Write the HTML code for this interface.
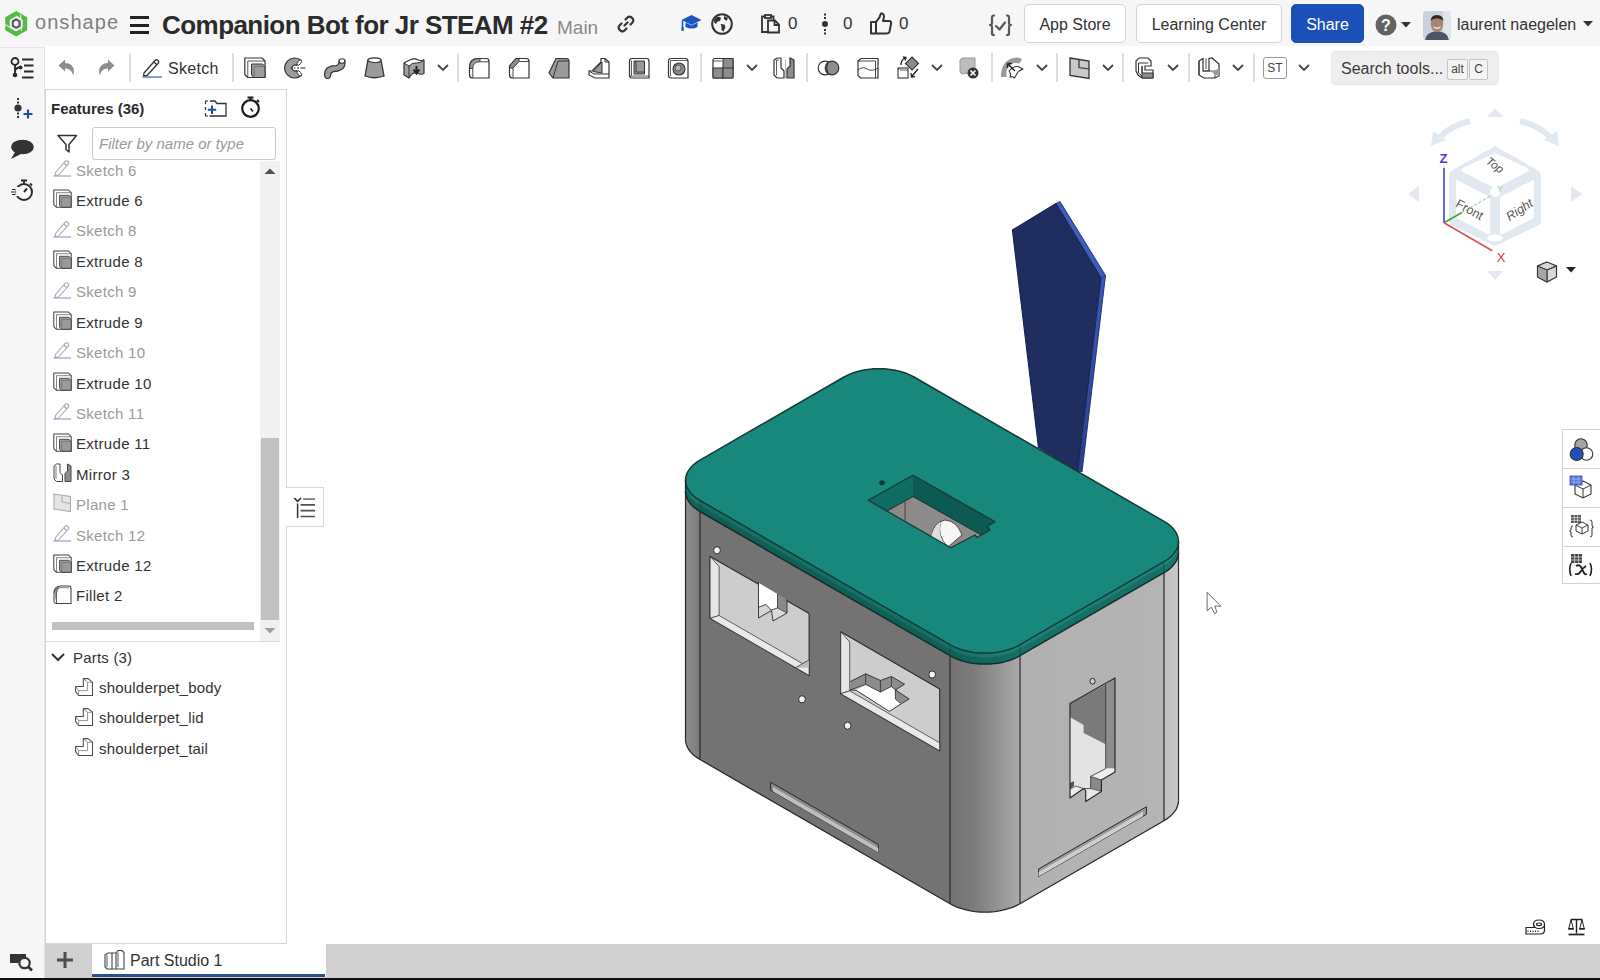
<!DOCTYPE html>
<html><head><meta charset="utf-8">
<style>
*{box-sizing:border-box;margin:0;padding:0}
html,body{width:1600px;height:980px;overflow:hidden;background:#fff;font-family:"Liberation Sans",sans-serif;color:#333}
.a{position:absolute}
#hdr{left:0;top:0;width:1600px;height:47px;background:#f6f6f6}
#rail{left:0;top:47px;width:45px;height:933px;background:#f6f6f6;border-right:1px solid #e2e2e2;border-top:1px solid #e6e6e6}
#tb{left:45px;top:46px;width:1555px;height:44px;background:#fff}
#panel{left:45px;top:89px;width:242px;height:855px;background:#fff;border:1px solid #d6d6d6}
#bbar{left:45px;top:944px;width:1555px;height:35px;background:#d0d0d0}
#bline{left:0;top:978px;width:1600px;height:2px;background:#111}
.sep{position:absolute;top:53px;width:2px;height:29px;background:#dedede}
.btn{position:absolute;top:4px;height:39px;border:1px solid #d4d4d4;border-radius:5px;background:#fff;font-size:16px;color:#333;line-height:39px;text-align:center}
.fi{position:absolute;left:76px;font-size:15px;color:#333;white-space:nowrap;letter-spacing:0.3px}
.fi.s{color:#9a9a9a}
svg{position:absolute;overflow:visible}
</style></head><body>
<div id="hdr" class="a"></div>
<div id="rail" class="a"></div>
<div id="tb" class="a"></div>
<div id="panel" class="a"></div>
<div id="bbar" class="a"></div>
<div id="bline" class="a"></div>
<!-- MODEL --><svg style="left:0;top:0" width="1600" height="980" viewBox="0 0 1600 980"><defs>
<linearGradient id="gL" x1="0" x2="1" y1="0" y2="0"><stop offset="0" stop-color="#8e8e8e"/><stop offset="1" stop-color="#7a7a7a"/></linearGradient>
<linearGradient id="gF" x1="0" x2="1" y1="0" y2="0"><stop offset="0" stop-color="#737373"/><stop offset="0.35" stop-color="#7c7c7c"/><stop offset="1" stop-color="#aaaaaa"/></linearGradient>
<linearGradient id="gR" x1="0" x2="1" y1="0" y2="0"><stop offset="0" stop-color="#b1b1b1"/><stop offset="1" stop-color="#b4b4b4"/></linearGradient>
<linearGradient id="gRR" x1="0" x2="1" y1="0" y2="0"><stop offset="0" stop-color="#c0c0c0"/><stop offset="1" stop-color="#c8c8c8"/></linearGradient>
<linearGradient id="gTail" x1="0" x2="0" y1="0" y2="1"><stop offset="0" stop-color="#3a5ab8"/><stop offset="1" stop-color="#2b3f92"/></linearGradient>
<linearGradient id="gLidF" x1="0" x2="1" y1="0" y2="0"><stop offset="0" stop-color="#0e5f56"/><stop offset="1" stop-color="#127066"/></linearGradient><linearGradient id="gLidF1" x1="0" x2="1" y1="0" y2="0"><stop offset="0" stop-color="#137267"/><stop offset="1" stop-color="#198276"/></linearGradient>
</defs><polygon points="1012.4,230.0 1056.0,203.5 1101.0,278.0 1077.5,472.0 1038.5,448.0" fill="#1f2e5e"/>
<polygon points="1056.0,203.5 1060.0,201.5 1105.5,275.5 1101.0,278.0" fill="#3f5fc0"/>
<polygon points="1101.0,278.0 1105.5,275.5 1082.0,472.0 1077.5,472.0" fill="url(#gTail)"/>
<polyline points="1038.5,448.0 1012.4,230.0 1056.0,203.5 1101.0,278.0 1077.5,472.0" fill="none" stroke="#172250" stroke-width="1.1" stroke-linejoin="round"/>
<polyline points="1056.0,203.5 1060.0,201.5 1105.5,275.5 1082.0,472.0" fill="none" stroke="#1a2860" stroke-width="0.9" stroke-linejoin="round"/>
<polyline points="1101.0,278.0 1105.5,275.5" fill="none" stroke="#1a2860" stroke-width="0.8" stroke-linejoin="round"/>
<polygon points="685.5,491.3 685.7,494.1 686.5,496.9 687.6,499.6 689.3,502.2 691.3,504.8 693.8,507.2 696.7,509.4 700.0,511.5 700.0,759.5 696.7,757.4 693.8,755.2 691.3,752.8 689.3,750.2 687.6,747.6 686.5,744.9 685.7,742.1 685.5,739.3" fill="url(#gL)"/>
<polygon points="700.0,511.5 950.0,655.7 950.0,903.7 700.0,759.5" fill="#737373"/>
<polygon points="950.0,655.7 953.6,657.6 957.5,659.3 961.7,660.7 966.1,661.9 970.6,662.9 975.3,663.6 980.1,664.0 985.0,664.1 989.9,664.0 994.7,663.6 999.4,662.9 1003.9,661.9 1008.3,660.7 1012.5,659.3 1016.4,657.6 1020.0,655.7 1020.0,903.7 1016.4,905.6 1012.5,907.3 1008.3,908.7 1003.9,909.9 999.4,910.9 994.7,911.6 989.9,912.0 985.0,912.1 980.1,912.0 975.3,911.6 970.6,910.9 966.1,909.9 961.7,908.7 957.5,907.3 953.6,905.6 950.0,903.7" fill="url(#gF)"/>
<polygon points="1020.0,655.7 1164.0,572.7 1164.0,820.7 1020.0,903.7" fill="url(#gR)"/>
<polygon points="1164.0,572.7 1167.3,570.6 1170.2,568.3 1172.7,565.9 1174.7,563.4 1176.4,560.8 1177.5,558.0 1178.3,555.3 1178.5,552.5 1178.5,800.5 1178.3,803.3 1177.5,806.0 1176.4,808.8 1174.7,811.4 1172.7,813.9 1170.2,816.3 1167.3,818.6 1164.0,820.7" fill="url(#gRR)"/>
<polygon points="710.1,556.4 809.1,613.5 809.1,675.4 710.1,618.3" fill="#cdcdcd" stroke="#2a2a2a" stroke-width="1.1" stroke-linejoin="round"/>
<polygon points="710.1,556.4 719.1,566.6 719.1,615.5 710.1,618.3" fill="#e6e6e6" stroke="#2a2a2a" stroke-width="0.7" stroke-linejoin="round"/>
<polygon points="710.1,618.3 719.1,615.5 809.1,667.4 809.1,675.4" fill="#e9e9e9" stroke="#2a2a2a" stroke-width="0.7" stroke-linejoin="round"/>
<polygon points="840.7,631.8 939.7,688.9 939.7,750.8 840.7,693.7" fill="#cdcdcd" stroke="#2a2a2a" stroke-width="1.1" stroke-linejoin="round"/>
<polygon points="840.7,631.8 849.7,642.0 849.7,690.9 840.7,693.7" fill="#e6e6e6" stroke="#2a2a2a" stroke-width="0.7" stroke-linejoin="round"/>
<polygon points="840.7,693.7 849.7,690.9 939.7,742.8 939.7,750.8" fill="#e9e9e9" stroke="#2a2a2a" stroke-width="0.7" stroke-linejoin="round"/>
<polygon points="759.0,583.0 777.5,594.0 777.5,608.0 771.0,610.0 766.0,604.5 759.0,607.0" fill="#ffffff"/>
<polygon points="777.5,594.0 787.0,599.5 787.0,613.0 777.5,608.0" fill="#8a8a8a"/>
<polygon points="759.0,607.0 766.0,604.5 771.0,610.0 759.0,617.5" fill="#d6d6d6"/>
<polygon points="771.0,610.0 777.5,608.0 787.0,613.0 773.0,621.0" fill="#dadada"/>
<polyline points="758.5,582.0 758.5,618.0 771.5,610.5 773.0,621.0 787.0,613.0 787.0,599.5" fill="none" stroke="#2a2a2a" stroke-width="0.9" stroke-linejoin="round"/>
<polyline points="759.0,607.0 766.0,604.5 771.0,610.0" fill="none" stroke="#2a2a2a" stroke-width="0.8" stroke-linejoin="round"/>
<polyline points="777.5,594.0 777.5,608.0 771.0,610.0" fill="none" stroke="#2a2a2a" stroke-width="0.8" stroke-linejoin="round"/>
<polyline points="777.5,608.0 787.0,613.0" fill="none" stroke="#2a2a2a" stroke-width="0.7" stroke-linejoin="round"/>
<polygon points="795.0,668.0 808.9,660.0 808.9,667.5" fill="#bdbdbd"/>
<polyline points="795.0,668.0 808.9,660.0" fill="none" stroke="#2a2a2a" stroke-width="0.7" stroke-linejoin="round"/>
<polygon points="856.2,690.3 865.7,684.5 880.4,692.0 891.4,686.5 895.4,690.0 895.4,699.0 900.6,703.5 889.3,711.4" fill="#ffffff"/>
<polygon points="850.1,681.7 865.7,673.8 880.4,680.5 891.4,676.5 904.6,684.2 895.4,690.0 891.4,686.5 880.4,692.0 865.7,684.5 850.1,690.0" fill="#8c8c8c"/>
<polygon points="895.4,690.0 909.2,698.9 900.6,703.5 895.4,699.0" fill="#8c8c8c"/>
<polyline points="850.1,681.7 865.7,673.8 880.4,680.5 891.4,676.5 904.6,684.2 895.4,690.0 909.2,698.9 889.3,711.4 856.2,690.3 850.1,690.0" fill="none" stroke="#2a2a2a" stroke-width="0.9" stroke-linejoin="round"/>
<polyline points="865.7,673.8 865.7,684.5" fill="none" stroke="#2a2a2a" stroke-width="0.8" stroke-linejoin="round"/>
<polyline points="880.4,680.5 880.4,692.0" fill="none" stroke="#2a2a2a" stroke-width="0.8" stroke-linejoin="round"/>
<polyline points="891.4,676.5 891.4,686.5" fill="none" stroke="#2a2a2a" stroke-width="0.7" stroke-linejoin="round"/>
<polyline points="850.1,690.0 865.7,684.5 880.4,692.0 891.4,686.5 895.4,690.0 895.4,699.0 900.6,703.5" fill="none" stroke="#2a2a2a" stroke-width="0.8" stroke-linejoin="round"/>
<ellipse cx="717.0" cy="550.3" rx="3.4" ry="3.6" fill="#f2f2f2" stroke="#2a2a2a" stroke-width="1"/>
<ellipse cx="802.0" cy="699.3" rx="3.4" ry="3.6" fill="#f2f2f2" stroke="#2a2a2a" stroke-width="1"/>
<ellipse cx="847.6" cy="725.7" rx="3.4" ry="3.6" fill="#f2f2f2" stroke="#2a2a2a" stroke-width="1"/>
<ellipse cx="932.2" cy="674.5" rx="3.4" ry="3.6" fill="#f2f2f2" stroke="#2a2a2a" stroke-width="1"/>
<polygon points="770.6,782.2 878.3,844.4 878.3,852.4 770.6,790.2" fill="#8a8a8a" stroke="#2a2a2a" stroke-width="1" stroke-linejoin="round"/>
<polygon points="773.0,787.1 878.3,847.9 878.3,852.4 773.0,791.6" fill="#bfbfbf"/>
<polygon points="1070.0,703.6 1115.0,677.9 1115.0,772.1 1101.4,780.0 1101.4,791.4 1085.7,801.4 1085.7,790.7 1083.6,788.6 1070.0,797.9" fill="#e3e3e3"/>
<polygon points="1105.7,684.3 1115.0,677.9 1115.0,768.6 1105.7,768.6" fill="#8e8e8e"/>
<polygon points="1070.0,703.6 1105.7,684.3 1105.7,744.3 1083.6,732.9 1083.6,725.0 1070.0,717.1" fill="#7a7a7a"/>
<polygon points="1090.7,776.4 1105.7,768.6 1115.0,768.6 1115.0,772.1 1101.4,780.0" fill="#eeeeee"/>
<polygon points="1090.7,776.4 1101.4,780.0 1101.4,791.4 1090.7,788.6" fill="#8a8a8a"/>
<polygon points="1070.0,789.0 1076.0,786.0 1083.6,788.6 1070.0,797.9" fill="#eaeaea"/>
<polygon points="1083.6,788.6 1090.7,788.6 1101.4,791.4 1085.7,801.4 1085.7,790.7" fill="#e8e8e8"/>
<polygon points="1070.0,783.0 1074.0,781.0 1074.0,786.0 1070.0,789.0" fill="#555"/>
<polyline points="1105.7,684.3 1105.7,768.6 1090.7,776.4 1090.7,788.6 1083.6,788.6" fill="none" stroke="#2a2a2a" stroke-width="0.8" stroke-linejoin="round"/>
<polyline points="1101.4,780.0 1090.7,776.4" fill="none" stroke="#2a2a2a" stroke-width="0.7" stroke-linejoin="round"/>
<polyline points="1070.0,789.0 1076.0,786.0 1083.6,788.6" fill="none" stroke="#2a2a2a" stroke-width="0.7" stroke-linejoin="round"/>
<polyline points="1090.7,788.6 1101.4,791.4" fill="none" stroke="#2a2a2a" stroke-width="0.6" stroke-linejoin="round"/>
<polygon points="1070.0,703.6 1115.0,677.9 1115.0,772.1 1101.4,780.0 1101.4,791.4 1085.7,801.4 1085.7,790.7 1083.6,788.6 1070.0,797.9" fill="none" stroke="#2a2a2a" stroke-width="1.2" stroke-linejoin="round"/>
<ellipse cx="1092.5" cy="681.2" rx="2.6" ry="2.9" fill="#cfcfcf" stroke="#2a2a2a" stroke-width="1"/>
<polygon points="1038.6,869.0 1146.4,806.8 1146.4,814.3 1038.6,876.5" fill="#9a9a9a" stroke="#2a2a2a" stroke-width="1" stroke-linejoin="round"/>
<polygon points="1038.6,872.0 1143.0,811.8 1143.0,816.3 1038.6,876.5" fill="#cfcfcf"/>
<polyline points="685.5,739.3 685.7,742.1 686.5,744.9 687.6,747.6 689.3,750.2 691.3,752.8 693.8,755.2 696.7,757.4 700.0,759.5 700.0,759.5 950.0,903.7 953.6,905.6 957.5,907.3 961.7,908.7 966.1,909.9 970.6,910.9 975.3,911.6 980.1,912.0 985.0,912.1 989.9,912.0 994.7,911.6 999.4,910.9 1003.9,909.9 1008.3,908.7 1012.5,907.3 1016.4,905.6 1020.0,903.7 1164.0,820.7 1167.3,818.6 1170.2,816.3 1172.7,813.9 1174.7,811.4 1176.4,808.8 1177.5,806.0 1178.3,803.3 1178.5,800.5" fill="none" stroke="#2a2a2a" stroke-width="1.3" stroke-linejoin="round"/>
<polyline points="700.0,511.5 700.0,759.5" fill="none" stroke="#2a2a2a" stroke-width="1.2" stroke-linejoin="round"/>
<polyline points="950.0,655.7 950.0,903.7" fill="none" stroke="#2a2a2a" stroke-width="1.2" stroke-linejoin="round"/>
<polyline points="1020.0,655.7 1020.0,903.7" fill="none" stroke="#2a2a2a" stroke-width="1.2" stroke-linejoin="round"/>
<polyline points="1164.0,572.7 1164.0,820.7" fill="none" stroke="#2a2a2a" stroke-width="1.2" stroke-linejoin="round"/>
<polyline points="685.5,491.3 685.5,739.3" fill="none" stroke="#2a2a2a" stroke-width="1.2" stroke-linejoin="round"/>
<polyline points="1178.5,552.5 1178.5,800.5" fill="none" stroke="#2a2a2a" stroke-width="1.2" stroke-linejoin="round"/>
<polygon points="685.5,480.3 685.7,483.1 686.5,485.9 687.6,488.6 689.3,491.2 691.3,493.8 693.8,496.2 696.7,498.4 700.0,500.5 700.0,505.0 696.7,502.9 693.8,500.7 691.3,498.3 689.3,495.7 687.6,493.1 686.5,490.4 685.7,487.6 685.5,484.8" fill="#167c71"/>
<polygon points="700.0,500.5 950.0,644.7 950.0,649.2 700.0,505.0" fill="#137267"/>
<polygon points="950.0,644.7 953.6,646.6 957.5,648.3 961.7,649.7 966.1,650.9 970.6,651.9 975.3,652.6 980.1,653.0 985.0,653.1 989.9,653.0 994.7,652.6 999.4,651.9 1003.9,650.9 1008.3,649.7 1012.5,648.3 1016.4,646.6 1020.0,644.7 1020.0,649.2 1016.4,651.1 1012.5,652.8 1008.3,654.2 1003.9,655.4 999.4,656.4 994.7,657.1 989.9,657.5 985.0,657.6 980.1,657.5 975.3,657.1 970.6,656.4 966.1,655.4 961.7,654.2 957.5,652.8 953.6,651.1 950.0,649.2" fill="url(#gLidF1)"/>
<polygon points="1020.0,644.7 1164.0,561.7 1164.0,566.2 1020.0,649.2" fill="#198276"/>
<polygon points="1164.0,561.7 1167.3,559.6 1170.2,557.3 1172.7,554.9 1174.7,552.4 1176.4,549.8 1177.5,547.0 1178.3,544.3 1178.5,541.5 1178.5,546.0 1178.3,548.8 1177.5,551.5 1176.4,554.3 1174.7,556.9 1172.7,559.4 1170.2,561.8 1167.3,564.1 1164.0,566.2" fill="#1b897c"/>
<polygon points="685.5,484.8 685.7,487.6 686.5,490.4 687.6,493.1 689.3,495.7 691.3,498.3 693.8,500.7 696.7,502.9 700.0,505.0 700.0,511.5 696.7,509.4 693.8,507.2 691.3,504.8 689.3,502.2 687.6,499.6 686.5,496.9 685.7,494.1 685.5,491.3" fill="#0f645b"/>
<polygon points="700.0,505.0 950.0,649.2 950.0,655.7 700.0,511.5" fill="#0e5f56"/>
<polygon points="950.0,649.2 953.6,651.1 957.5,652.8 961.7,654.2 966.1,655.4 970.6,656.4 975.3,657.1 980.1,657.5 985.0,657.6 989.9,657.5 994.7,657.1 999.4,656.4 1003.9,655.4 1008.3,654.2 1012.5,652.8 1016.4,651.1 1020.0,649.2 1020.0,655.7 1016.4,657.6 1012.5,659.3 1008.3,660.7 1003.9,661.9 999.4,662.9 994.7,663.6 989.9,664.0 985.0,664.1 980.1,664.0 975.3,663.6 970.6,662.9 966.1,661.9 961.7,660.7 957.5,659.3 953.6,657.6 950.0,655.7" fill="url(#gLidF)"/>
<polygon points="1020.0,649.2 1164.0,566.2 1164.0,572.7 1020.0,655.7" fill="#127066"/>
<polygon points="1164.0,566.2 1167.3,564.1 1170.2,561.8 1172.7,559.4 1174.7,556.9 1176.4,554.3 1177.5,551.5 1178.3,548.8 1178.5,546.0 1178.5,552.5 1178.3,555.3 1177.5,558.0 1176.4,560.8 1174.7,563.4 1172.7,565.9 1170.2,568.3 1167.3,570.6 1164.0,572.7" fill="#15786d"/>
<polyline points="685.5,484.8 685.7,487.6 686.5,490.4 687.6,493.1 689.3,495.7 691.3,498.3 693.8,500.7 696.7,502.9 700.0,505.0 700.0,505.0 950.0,649.2 953.6,651.1 957.5,652.8 961.7,654.2 966.1,655.4 970.6,656.4 975.3,657.1 980.1,657.5 985.0,657.6 989.9,657.5 994.7,657.1 999.4,656.4 1003.9,655.4 1008.3,654.2 1012.5,652.8 1016.4,651.1 1020.0,649.2 1164.0,566.2 1167.3,564.1 1170.2,561.8 1172.7,559.4 1174.7,556.9 1176.4,554.3 1177.5,551.5 1178.3,548.8 1178.5,546.0" fill="none" stroke="#0f4f48" stroke-width="0.7" stroke-linejoin="round"/>
<polygon points="700.0,460.1 696.3,462.5 693.1,465.1 690.4,467.9 688.3,470.9 686.7,473.9 685.8,477.1 685.5,480.3 685.8,483.5 686.7,486.7 688.3,489.7 690.4,492.7 693.1,495.5 696.3,498.1 700.0,500.5 950.0,644.7 954.1,646.9 958.7,648.7 963.5,650.3 968.7,651.5 974.0,652.4 979.5,652.9 985.0,653.1 990.5,652.9 996.0,652.4 1001.3,651.5 1006.5,650.3 1011.3,648.7 1015.9,646.9 1020.0,644.7 1164.0,561.7 1167.7,559.3 1170.9,556.7 1173.6,553.9 1175.7,550.9 1177.3,547.8 1178.2,544.7 1178.5,541.5 1178.2,538.3 1177.3,535.1 1175.7,532.0 1173.6,529.1 1170.9,526.3 1167.7,523.7 1164.0,521.3 914.0,377.0 909.9,374.9 905.3,373.0 900.5,371.5 895.3,370.3 890.0,369.4 884.5,368.8 879.0,368.7 873.5,368.8 868.0,369.4 862.7,370.3 857.5,371.5 852.7,373.0 848.1,374.9 844.0,377.0" fill="#18877c" stroke="#173a36" stroke-width="1.5" stroke-linejoin="round"/>
<polyline points="685.5,491.3 685.7,494.1 686.5,496.9 687.6,499.6 689.3,502.2 691.3,504.8 693.8,507.2 696.7,509.4 700.0,511.5 700.0,511.5 950.0,655.7 953.6,657.6 957.5,659.3 961.7,660.7 966.1,661.9 970.6,662.9 975.3,663.6 980.1,664.0 985.0,664.1 989.9,664.0 994.7,663.6 999.4,662.9 1003.9,661.9 1008.3,660.7 1012.5,659.3 1016.4,657.6 1020.0,655.7 1164.0,572.7 1167.3,570.6 1170.2,568.3 1172.7,565.9 1174.7,563.4 1176.4,560.8 1177.5,558.0 1178.3,555.3 1178.5,552.5" fill="none" stroke="#152c29" stroke-width="1.5" stroke-linejoin="round"/>
<polyline points="700.0,500.5 700.0,511.5" fill="none" stroke="#1f4a45" stroke-width="0.8" stroke-linejoin="round"/>
<polyline points="950.0,644.7 950.0,655.7" fill="none" stroke="#1f4a45" stroke-width="0.8" stroke-linejoin="round"/>
<polyline points="1020.0,644.7 1020.0,655.7" fill="none" stroke="#1f4a45" stroke-width="0.8" stroke-linejoin="round"/>
<polyline points="1164.0,561.7 1164.0,572.7" fill="none" stroke="#1f4a45" stroke-width="0.8" stroke-linejoin="round"/>
<polyline points="685.5,480.3 685.5,491.3" fill="none" stroke="#17302d" stroke-width="1.3" stroke-linejoin="round"/>
<polyline points="1178.5,541.5 1178.5,552.5" fill="none" stroke="#17302d" stroke-width="1.3" stroke-linejoin="round"/>
<clipPath id="hc"><polygon points="868.2,500.3 913.0,475.3 995.2,521.7 987.0,526.5 990.0,530.0 977.0,537.5 975.0,535.0 950.8,547.8"/></clipPath>
<g clip-path="url(#hc)">
<polygon points="868.2,500.3 913.0,475.3 995.2,521.7 987.0,526.5 990.0,530.0 977.0,537.5 975.0,535.0 950.8,547.8" fill="#8b8b8b"/>
<polygon points="868.2,500.3 913.0,475.3 913.0,496.5 868.2,521.5" fill="#0f6c62"/>
<polygon points="913.0,475.3 995.2,521.7 995.2,542.9 913.0,496.5" fill="#0c5a52"/>
<polygon points="887.0,531.0 913.0,516.0 913.0,496.5 887.0,511.0" fill="#8e8888"/>
<polyline points="868.2,521.5 913.0,496.5 995.2,542.9" fill="none" stroke="#1c2e2b" stroke-width="1" stroke-linejoin="round"/>
<polyline points="905.0,501.0 905.0,525.0" fill="none" stroke="#444" stroke-width="1" stroke-linejoin="round"/>
<path d="M931,538 Q933,522 945,520 Q957,521 962,535 L948,547 Q935,546 931,538Z" fill="#f6f6f6" stroke="#3a3a3a" stroke-width="0.9"/>
<path d="M941,521.5 Q936,535 948,547" fill="none" stroke="#444" stroke-width="0.9"/>
<path d="M931,538 Q932,528 941,522 Q937,535 945,545 Q935,545 931,538Z" fill="#dcdcdc"/>
</g>
<polygon points="868.2,500.3 913.0,475.3 995.2,521.7 987.0,526.5 990.0,530.0 977.0,537.5 975.0,535.0 950.8,547.8" fill="none" stroke="#1a3835" stroke-width="1.3" stroke-linejoin="round"/>
<ellipse cx="882.0" cy="482.7" rx="2.8" ry="2.5" fill="#123a35"/>
<path d="M1207.1,592.3 L1207.1,610.7 L1211.4,607.3 L1214.6,613.6 L1216.8,612.1 L1214.8,606 L1221,606.2 Z" fill="#fff" stroke="#5a5a5a" stroke-width="0.9" stroke-linejoin="round"/></svg><!-- /MODEL -->


<!-- header text -->
<svg style="left:4px;top:10px" width="25" height="27" viewBox="0 0 25 27">
<path fill-rule="evenodd" fill="#58b947" d="M12.2 1 L23.2 7.2 L23.2 20.2 L12.2 26.4 L1.2 20.2 L1.2 7.2 Z M12.2 6.2 L18.6 9.9 L18.6 17.5 L12.2 21.2 L5.8 17.5 L5.8 9.9 Z"/>
<path d="M1 14.5 L11.5 20.5 M16.6 4.5 L17.2 21 M12.5 6 L17.5 9.5" stroke="#d9f5cf" stroke-width="1.1"/>
<path d="M12.2 9.3 L15.6 11.3 L15.6 15.9 L12.2 17.9 L8.8 15.9 L8.8 11.3 Z" fill="none" stroke="#555560" stroke-width="2.1"/>
<path d="M15.6 11.3 L15.6 15.9" stroke="#7f5f95" stroke-width="2.3"/>
</svg>
<div class="a" style="left:35px;top:11px;font-size:20px;color:#7f7f7f;letter-spacing:1.05px">onshape</div>
<div class="a" style="left:130px;top:16px;width:19px;height:3px;background:#222"></div>
<div class="a" style="left:130px;top:23.5px;width:19px;height:3px;background:#222"></div>
<div class="a" style="left:130px;top:31px;width:19px;height:3px;background:#222"></div>
<div class="a" style="left:162px;top:10px;font-size:26px;font-weight:bold;color:#2b2b2b;white-space:nowrap;letter-spacing:-0.55px">Companion Bot for Jr STEAM #2</div>
<div class="a" style="left:557px;top:17px;font-size:19px;color:#8a8a8a">Main</div>
<svg style="left:617px;top:15px" width="18" height="18" viewBox="0 0 18 18"><g fill="none" stroke="#333" stroke-width="2.2" stroke-linecap="round"><path d="M7.5 10.5 L10.5 7.5"/><path d="M8.5 4.5 L10.5 2.5 Q12 1 14 2 L16 4 Q17 6 15.5 7.5 L13.5 9.5"/><path d="M9.5 13.5 L7.5 15.5 Q6 17 4 16 L2 14 Q1 12 2.5 10.5 L4.5 8.5"/></g></svg>
<svg style="left:681px;top:14px" width="21" height="18" viewBox="0 0 21 18"><path d="M10.5 1 L20.5 6 L10.5 11 L0.5 6 Z" fill="#1d55c2"/><path d="M4.5 8.5 L4.5 13 Q10.5 16 16.5 13 L16.5 8.5 L10.5 11.5 Z" fill="#1d55c2"/><path d="M1.5 6.5 L1.5 15" stroke="#1d55c2" stroke-width="1.6"/><rect x="0.5" y="13.5" width="2.2" height="3.5" fill="#1d55c2"/></svg>
<svg style="left:711px;top:13px" width="22" height="22" viewBox="0 0 22 22"><circle cx="11" cy="11" r="9.8" fill="none" stroke="#333" stroke-width="2"/><path d="M5 4.5 Q8 3 10 5 L9 8 L6.5 8.5 L5 11 L3.2 9.5 Q3 6 5 4.5Z M9.5 11 L13.5 11.5 L14.5 14 L12.5 18.5 L10.5 17 L10.5 14 Z M13 3 L17 5 L15.5 8 L13 6 Z" fill="#333"/></svg>
<svg style="left:760px;top:14px" width="21" height="20" viewBox="0 0 21 20"><g fill="none" stroke="#333" stroke-width="1.8"><path d="M5.5 2.5 L2 2.5 L2 18 L8 18"/><rect x="5" y="1" width="6" height="3"/><path d="M11 2.5 L13.5 2.5 L13.5 6"/><path d="M8 6.5 L15 6.5 L19 10.5 L19 18.5 L8 18.5 Z"/><path d="M14.5 6.5 L14.5 11 L19 11"/></g></svg>
<div class="a" style="left:788px;top:14px;font-size:17px;color:#333">0</div>
<svg style="left:820px;top:13px" width="10" height="22" viewBox="0 0 10 22"><circle cx="5" cy="11" r="3" fill="#333"/><rect x="4" y="0.5" width="2" height="2" fill="#333"/><rect x="4" y="4" width="2" height="2" fill="#333"/><rect x="4" y="16" width="2" height="2" fill="#333"/><rect x="4" y="19.5" width="2" height="2" fill="#333"/></svg>
<div class="a" style="left:843px;top:14px;font-size:17px;color:#333">0</div>
<svg style="left:869px;top:12px" width="24" height="23" viewBox="0 0 24 23"><path d="M2 10 L7 10 L7 21.5 L2 21.5 Z M7 10 Q11 6 12 1.5 Q15 1 15 5 L14 9 L20.5 9 Q22.5 9.5 22 12 L20.5 19.5 Q20 21.5 17.5 21.5 L7 21.5" fill="none" stroke="#333" stroke-width="2" stroke-linejoin="round"/></svg>
<div class="a" style="left:899px;top:14px;font-size:17px;color:#333">0</div>
<svg style="left:988px;top:14px" width="25" height="23" viewBox="0 0 25 23"><g fill="none" stroke="#585858" stroke-width="2.2" stroke-linejoin="round" stroke-linecap="round"><path d="M6 1.5 Q4 1.5 4 3.5 L4 9 Q4 11 2 11 Q4 11 4 13 L4 19.5 Q4 21 6 21"/><path d="M19 1.5 Q21 1.5 21 3.5 L21 9 Q21 11 23 11 Q21 11 21 13 L21 19.5 Q21 21 19 21"/><path d="M8 12 L11.5 15.5 L17 8.5"/></g></svg>
<div class="btn" style="left:1024px;width:102px">App Store</div>
<div class="btn" style="left:1136px;width:146px">Learning Center</div>
<div class="btn" style="left:1291px;width:73px;background:#1c50b8;border-color:#1c50b8;color:#fff">Share</div>
<svg style="left:1375px;top:14px" width="22" height="22" viewBox="0 0 22 22"><circle cx="11" cy="11" r="10.5" fill="#626262"/><text x="11" y="17" font-family="Liberation Sans" font-weight="bold" font-size="16" fill="#fff" text-anchor="middle">?</text></svg>
<svg style="left:1401px;top:22px" width="10" height="6" viewBox="0 0 10 6"><path d="M0 0 L10 0 L5 5.5Z" fill="#333"/></svg>
<svg style="left:1423px;top:11px" width="28" height="29" viewBox="0 0 28 29"><defs><clipPath id="av"><rect x="0" y="0" width="28" height="29" rx="3"/></clipPath></defs><g clip-path="url(#av)"><rect width="28" height="29" fill="#c9d3dd"/><rect x="20" y="0" width="8" height="29" fill="#dfe5ea"/><path d="M2 29 Q3 21 14 20 Q25 21 26 29 Z" fill="#4d5566"/><ellipse cx="14" cy="13" rx="6.3" ry="8" fill="#a98373"/><path d="M7.5 10 Q8 4 14 4 Q20 4 20.5 10 Q18 7 14 7.5 Q10 7 7.5 10Z" fill="#2f2826"/><path d="M10.5 16 Q14 18.5 17.5 16" stroke="#f1e6e0" stroke-width="1.3" fill="none"/></g></svg>
<div class="a" style="left:1457px;top:16px;font-size:16px;color:#333;white-space:nowrap">laurent naegelen</div>
<svg style="left:1583px;top:21px" width="10" height="6" viewBox="0 0 10 6"><path d="M0 0 L10 0 L5 5.5Z" fill="#333"/></svg>
<!-- toolbar -->
<div class="sep" style="left:129px"></div>
<div class="sep" style="left:232px"></div>
<div class="sep" style="left:457px"></div>
<div class="sep" style="left:700px"></div>
<div class="sep" style="left:806px"></div>
<div class="sep" style="left:991px"></div>
<div class="sep" style="left:1056px"></div>
<div class="sep" style="left:1122px"></div>
<div class="sep" style="left:1188px"></div>
<div class="sep" style="left:1253px"></div>
<svg style="left:58px;top:59px" width="17" height="17" viewBox="0 0 17 17"><path d="M0.5 6.5 L7 0.5 L7 4 Q15 4 16 12 L15.5 16.5 Q13 9 7 9.5 L7 12.5 Z" fill="#8d8d8d"/></svg>
<svg style="left:98px;top:59px" width="17" height="17" viewBox="0 0 17 17"><path d="M16.5 6.5 L10 0.5 L10 4 Q2 4 1 12 L1.5 16.5 Q4 9 10 9.5 L10 12.5 Z" fill="#8d8d8d"/></svg>
<svg style="left:141px;top:57px" width="21" height="21" viewBox="0 0 21 21"><path d="M3 16 L14 3.5 Q15.5 2 17 3.5 Q18.5 5 17 6.5 L6 18.5 L2.5 19 Z M13 5 L15.5 7.5" fill="none" stroke="#333" stroke-width="1.3" stroke-linejoin="round"/><path d="M1.5 20 L21 20" stroke="#4a6fb8" stroke-width="1.3"/></svg>
<div class="a" style="left:168px;top:60px;font-size:16px;color:#333;letter-spacing:0.3px">Sketch</div>
<svg style="left:244px;top:57px" width="22" height="22" viewBox="0 0 22 22"><path d="M0.8 1 L18 1 L21 4 L21 20.5 L3.8 20.5 L0.8 17.5 Z" fill="#fff" stroke="#333" stroke-width="1.2" stroke-linejoin="round"/><path d="M3.8 20.5 L3.8 4 L21 4" fill="none" stroke="#444" stroke-width="0.9"/><path d="M7.5 7 L18.5 7 L21 9.5 L21 20.5 L10 20.5 L7.5 18 Z" fill="#9c9c9c" stroke="#333" stroke-width="1"/><path d="M10 20.5 L10 9.5 L21 9.5" fill="none" stroke="#666" stroke-width="0.7"/></svg>
<svg style="left:284px;top:57px" width="22" height="22" viewBox="0 0 22 22"><path d="M17.2 3.5 A10 10 0 1 0 17.2 18.5 L12.6 13.6 A3 3 0 1 1 12.6 8.4 Z" fill="#9c9c9c" stroke="#333" stroke-width="1.2" stroke-linejoin="round"/><ellipse cx="15.3" cy="5.6" rx="1.6" ry="3.1" transform="rotate(38 15.3 5.6)" fill="#fff" stroke="#333" stroke-width="0.9"/><ellipse cx="15.3" cy="16.4" rx="1.6" ry="3.1" transform="rotate(-38 15.3 16.4)" fill="#fff" stroke="#333" stroke-width="0.9"/><path d="M6.5 11 L8.5 11 M10 11 L11.5 11 M13 11 L15 11 M16.5 11 L21.5 11" stroke="#222" stroke-width="1"/></svg>
<svg style="left:323px;top:57px" width="23" height="22" viewBox="0 0 23 22"><path d="M1.6 18 Q1.3 12 6 10 Q9 8.6 13 8.6 Q16 8.3 16 4.5 L22 4 Q22.6 10.5 18 12.8 Q15 14.6 10.5 14.6 Q7.8 15 7.6 18 Q7.3 21.5 4.6 21.5 Q1.8 21.5 1.6 18 Z" fill="#9c9c9c" stroke="#333" stroke-width="1.2" stroke-linejoin="round"/><ellipse cx="19" cy="4" rx="3" ry="2.3" fill="#fff" stroke="#333" stroke-width="1.1"/></svg>
<svg style="left:364px;top:57px" width="21" height="22" viewBox="0 0 21 22"><path d="M4 3 L17 3 L20 19 Q10.5 22.5 1 19 Z" fill="#9a9a9a" stroke="#333" stroke-width="1.3"/><ellipse cx="10.5" cy="3.2" rx="6.5" ry="2.3" fill="#fff" stroke="#333" stroke-width="1.1"/></svg>
<svg style="left:403px;top:57px" width="22" height="22" viewBox="0 0 22 22"><path d="M1 6 L8 2.5 Q12 1 15 3 Q18 4.5 21 3 L21 16.5 Q18 18 15 16.5 Q12 15 9 17 L6 21 L1 18 Z" fill="#a0a0a0" stroke="#333" stroke-width="1.2" stroke-linejoin="round"/><path d="M1 6 L8 2.5 Q12 1 15 3 Q18 4.5 21 3 Q17 6.5 13 6 Q9 5.5 6 9 Z" fill="#fff" stroke="#333" stroke-width="1"/><path d="M6 9 L6 21" stroke="#333" stroke-width="1"/><path d="M13.5 9 L13.5 15 M10.5 12.5 L13.5 16.5 L16.5 12.5" fill="none" stroke="#222" stroke-width="2"/></svg>
<svg style="left:437px;top:64px" width="12" height="8" viewBox="0 0 12 8"><path d="M1 1 L6 6 L11 1" fill="none" stroke="#444" stroke-width="1.8"/></svg>
<svg style="left:468px;top:57px" width="22" height="22" viewBox="0 0 22 22"><path d="M1.5 18 L1.5 10 Q1.5 1.5 10 1.5 L18 1.5 Q21 1.5 21 4 L21 21 L4.5 21 Q1.5 21 1.5 18 Z" fill="#fff" stroke="#333" stroke-width="1.2"/><path d="M1.5 11.5 Q1.5 1.5 11 1.5 L12 1.5 L12 4.8 L11.5 4.8 Q5 4.8 4.8 11.5 Z" fill="#9a9a9a" stroke="#333" stroke-width="0.9"/><path d="M4.8 11.5 L4.8 21 M12 4.8 L21 4.8" fill="none" stroke="#333" stroke-width="0.9"/></svg>
<svg style="left:508px;top:57px" width="22" height="22" viewBox="0 0 22 22"><path d="M1.5 9 L8 1.5 L18 1.5 Q21 1.5 21 4 L21 21 L4.5 21 Q1.5 21 1.5 18 Z" fill="#fff" stroke="#333" stroke-width="1.2"/><path d="M1.5 9 L8 1.5 L11 1.5 L11 4.5 L5 11 L1.5 11 Z" fill="#8e8e8e" stroke="#333" stroke-width="1"/><path d="M5 11 L5 21 M11 4.5 L21 4.5" fill="none" stroke="#333" stroke-width="0.9"/></svg>
<svg style="left:548px;top:57px" width="22" height="22" viewBox="0 0 22 22"><path d="M8 1.5 L18 1.5 Q21 1.5 21 4 L21 21 L5 21 L1 16 Z" fill="#9a9a9a" stroke="#333" stroke-width="1.2"/><path d="M10 4 L20.5 4 M10 4 L5 21" fill="none" stroke="#333" stroke-width="1"/></svg>
<svg style="left:588px;top:57px" width="22" height="22" viewBox="0 0 22 22"><path d="M13 1.5 L17 1.5 L21 5 L21 21 L7 21 L1 18 L1 14 L4 14 L13 5 Z" fill="#fff" stroke="#333" stroke-width="1.2"/><path d="M5 14.5 L14 5 L14 16 Z" fill="#9a9a9a" stroke="#333" stroke-width="1"/><path d="M1 14 L6 17 L21 17 M17 1.5 L17 5 L21 5" fill="none" stroke="#333" stroke-width="1"/></svg>
<svg style="left:628px;top:57px" width="22" height="22" viewBox="0 0 22 22"><path d="M1.5 4 Q1.5 1.5 4 1.5 L18.5 1.5 Q21 1.5 21 4 L21 21 L4 21 Q1.5 21 1.5 18.5 Z" fill="#fff" stroke="#333" stroke-width="1.2"/><path d="M6 4 L16.5 4 L16.5 17 L6 17 Z" fill="#9a9a9a" stroke="#333" stroke-width="1"/><path d="M8 4 L8 15 L16.5 15" fill="none" stroke="#333" stroke-width="0.9"/><path d="M3.5 19 L3.5 3.5 M1.5 19 L21 19" stroke="#333" stroke-width="0.8"/></svg>
<svg style="left:667px;top:57px" width="22" height="22" viewBox="0 0 22 22"><path d="M1.5 4 Q1.5 1.5 4 1.5 L18.5 1.5 Q21 1.5 21 4 L21 21 L4 21 Q1.5 21 1.5 18.5 Z" fill="#fff" stroke="#333" stroke-width="1.2"/><path d="M3.5 19 L3.5 3.5 L21 3.5" fill="none" stroke="#333" stroke-width="0.8"/><circle cx="12" cy="12" r="6" fill="#8a8a8a" stroke="#333" stroke-width="1.1"/><circle cx="11" cy="11" r="3" fill="#b5b5b5" stroke="#444" stroke-width="0.8"/></svg>
<svg style="left:712px;top:57px" width="22" height="22" viewBox="0 0 22 22"><rect x="1" y="1.5" width="20" height="19.5" rx="1.5" fill="#fff" stroke="#333" stroke-width="1.2"/><rect x="11" y="1.5" width="10" height="10" fill="#8d8d8d" stroke="#333" stroke-width="1"/><rect x="1" y="11" width="10" height="10" fill="#8d8d8d" stroke="#333" stroke-width="1"/><rect x="11" y="11" width="10" height="10" fill="#8d8d8d" stroke="#333" stroke-width="1"/><path d="M1 4 L10 4" stroke="#333" stroke-width="0.8"/></svg>
<svg style="left:746px;top:64px" width="12" height="8" viewBox="0 0 12 8"><path d="M1 1 L6 6 L11 1" fill="none" stroke="#444" stroke-width="1.8"/></svg>
<svg style="left:773px;top:57px" width="22" height="22" viewBox="0 0 22 22"><path d="M1 3 L4 1 L8 1 L8 11 L11 14 L11 21 L4 21 L1 18 Z" fill="#fff" stroke="#333" stroke-width="1.2"/><path d="M3.5 3 L3.5 18 M3.5 3 L6 3" fill="none" stroke="#333" stroke-width="0.8"/><path d="M14 21 L14 12 L17 9 L17 1 L21 3 L21 21 Z" fill="#8d8d8d" stroke="#333" stroke-width="1.2"/><path d="M12.5 3 L12.5 21" stroke="#aaa" stroke-width="0.8"/></svg>
<svg style="left:817px;top:57px" width="23" height="22" viewBox="0 0 23 22"><circle cx="8" cy="11" r="6.8" fill="#fff" stroke="#333" stroke-width="1.2"/><circle cx="15" cy="11" r="6.8" fill="#8d8d8d" stroke="#333" stroke-width="1.2"/><path d="M11.5 5.3 Q8 11 11.5 16.7" fill="none" stroke="#333" stroke-width="1.2"/></svg>
<svg style="left:857px;top:57px" width="22" height="22" viewBox="0 0 22 22"><path d="M1 4 L4 1.5 L21 1.5 L21 21 L3.5 21 L1 18.5 Z" fill="#fff" stroke="#333" stroke-width="1.2"/><path d="M1 4 L18.5 4 L18.5 21 M1 13 Q6 9 10 12 Q15 15 21 11" fill="none" stroke="#333" stroke-width="0.9"/></svg>
<svg style="left:897px;top:56px" width="22" height="23" viewBox="0 0 22 23"><rect x="1" y="12" width="10" height="10" fill="#fff" stroke="#333" stroke-width="1.1"/><path d="M1 14 L3 12 M3 14 L11 14" stroke="#333" stroke-width="0.8"/><path d="M15 1 L21.5 7.5 L15 14 L8.5 7.5 Z" fill="#8d8d8d" stroke="#333" stroke-width="1.1"/><path d="M4 9 Q4 4 8 2 M6 1 L9 1.5 L8 4.5" fill="none" stroke="#222" stroke-width="1.3"/><path d="M21 13 L15 20 M14 17 L14.5 21 L18 20.5" fill="none" stroke="#222" stroke-width="1.3"/></svg>
<svg style="left:931px;top:64px" width="12" height="8" viewBox="0 0 12 8"><path d="M1 1 L6 6 L11 1" fill="none" stroke="#444" stroke-width="1.8"/></svg>
<svg style="left:958px;top:57px" width="22" height="22" viewBox="0 0 22 22"><path d="M2 3 L4 1 L17 1 L17 15 L4 17 L2 15 Z" fill="#bdbdbd" stroke="#999" stroke-width="1"/><circle cx="15" cy="16" r="5.5" fill="#333"/><path d="M12.5 13.5 L17.5 18.5 M17.5 13.5 L12.5 18.5" stroke="#fff" stroke-width="1.6"/></svg>
<svg style="left:1000px;top:56px" width="24" height="23" viewBox="0 0 24 23"><path d="M1 21 Q0.5 6 13 2 Q18 0.5 22 3 L19.5 7.5 Q12 5.5 8 11 Q6 15 6.5 21 Z" fill="#9a9a9a"/><path d="M9 15 Q13 10 18 10.5 L23 13 Q18.5 14.5 16.5 18.5 L14.5 22 Q12.5 20 10 21 Q11.5 18 9 15 Z" fill="#fff" stroke="#333" stroke-width="1.1" stroke-linejoin="round"/><path d="M15 15 L8 8 M7.5 7.5 L7.5 12 M7.5 7.5 L12 7.5" fill="none" stroke="#222" stroke-width="1.5"/></svg>
<svg style="left:1036px;top:64px" width="12" height="8" viewBox="0 0 12 8"><path d="M1 1 L6 6 L11 1" fill="none" stroke="#444" stroke-width="1.8"/></svg>
<svg style="left:1069px;top:57px" width="21" height="22" viewBox="0 0 21 22"><path d="M1 1 L20 4 L20 21.5 L1 18.5 Z" fill="#c9c9c9" stroke="#333" stroke-width="1.3"/><path d="M10 2.5 L10 10.5 L20 12" fill="none" stroke="#333" stroke-width="1.2"/></svg>
<svg style="left:1102px;top:64px" width="12" height="8" viewBox="0 0 12 8"><path d="M1 1 L6 6 L11 1" fill="none" stroke="#444" stroke-width="1.8"/></svg>
<svg style="left:1135px;top:57px" width="19" height="22" viewBox="0 0 19 22"><path d="M1 4 L4 1 L13 1 L16 4 L16 9 L10 9 L10 13 L18 13 L18 21 L7 21 L3 18 L1 14 Z" fill="#fff" stroke="#333" stroke-width="1.2"/><path d="M3.5 6 L3.5 16 L7 19 L7 21 M4 6 L13 6" fill="none" stroke="#333" stroke-width="1"/><path d="M7 9 L7 16 L18 16 L18 21 L7 21 Z" fill="#8d8d8d" stroke="#333" stroke-width="1"/></svg>
<svg style="left:1167px;top:64px" width="12" height="8" viewBox="0 0 12 8"><path d="M1 1 L6 6 L11 1" fill="none" stroke="#444" stroke-width="1.8"/></svg>
<svg style="left:1198px;top:57px" width="22" height="22" viewBox="0 0 22 22"><path d="M1 4 L5 1.5 L5 14 L11 14 L11 1.5 L14 1 L21 7 L21 19 L17 21 L6 21 L1 18 Z" fill="#fff" stroke="#333" stroke-width="1.2"/><path d="M5 14 L14 14 L17 17 L17 21 M1 4 L1 18 M8 1.5 L8 12" fill="none" stroke="#333" stroke-width="0.9"/><path d="M13 14 L17 18 L21 18 L21 12 Z" fill="#9a9a9a"/></svg>
<svg style="left:1232px;top:64px" width="12" height="8" viewBox="0 0 12 8"><path d="M1 1 L6 6 L11 1" fill="none" stroke="#444" stroke-width="1.8"/></svg>
<div class="a" style="left:1263px;top:57px;width:24px;height:22px;border:1px solid #999;border-radius:3px;font-size:12px;color:#444;text-align:center;line-height:20px">ST</div>
<svg style="left:1298px;top:64px" width="12" height="8" viewBox="0 0 12 8"><path d="M1 1 L6 6 L11 1" fill="none" stroke="#444" stroke-width="1.8"/></svg>
<div class="a" style="left:1331px;top:51px;width:168px;height:34px;background:#eeeeee;border:1px solid #e6e6e6;border-radius:4px"></div>
<div class="a" style="left:1341px;top:59.5px;font-size:16px;color:#3a3a3a;white-space:nowrap">Search tools...</div>
<div class="a" style="left:1447px;top:59px;width:21px;height:21px;border:1px solid #c4c4c4;background:#f4f4f4;border-radius:2px;font-size:12px;color:#444;text-align:center;line-height:19px">alt</div>
<div class="a" style="left:1469px;top:59px;width:19px;height:21px;border:1px solid #c4c4c4;background:#f4f4f4;border-radius:2px;font-size:12px;color:#444;text-align:center;line-height:19px">C</div>
<!-- rail -->
<svg style="left:10px;top:57px" width="24" height="22" viewBox="0 0 24 22"><circle cx="5" cy="4.5" r="3.5" fill="none" stroke="#2a2a2a" stroke-width="1.8"/><path d="M5 8 L5 18.5 M5 15 Q5 10.5 10 10.5" fill="none" stroke="#2a2a2a" stroke-width="1.8"/><circle cx="5" cy="18" r="2.3" fill="#2a2a2a"/><circle cx="10.5" cy="10.5" r="2" fill="#2a2a2a"/><path d="M12 2.5 L23.5 2.5 M14 8.5 L23.5 8.5 M14 14.5 L23.5 14.5 M12 20.5 L23.5 20.5" stroke="#2a2a2a" stroke-width="1.9"/></svg>
<svg style="left:12px;top:97px" width="22" height="23" viewBox="0 0 22 23"><rect x="5" y="1" width="2" height="2" fill="#333"/><rect x="5" y="4.5" width="2" height="2" fill="#333"/><circle cx="6" cy="11" r="3.6" fill="#333"/><rect x="5" y="15.5" width="2" height="2" fill="#333"/><rect x="5" y="19" width="2" height="2" fill="#333"/><path d="M16 12.5 L16 21.5 M11.5 17 L20.5 17" stroke="#1d4fa8" stroke-width="2.2"/></svg>
<svg style="left:10px;top:139px" width="24" height="21" viewBox="0 0 24 21"><ellipse cx="12.5" cy="8" rx="11.3" ry="7.3" fill="#333"/><path d="M5 13 L1 20 L11 15 Z" fill="#333"/></svg>
<svg style="left:11px;top:179px" width="23" height="23" viewBox="0 0 23 23"><circle cx="13" cy="13" r="8" fill="none" stroke="#2a2a2a" stroke-width="2"/><path d="M10 1.5 L16 1.5 M13 1.5 L13 5 M19 4.5 L21 6.5" stroke="#2a2a2a" stroke-width="1.8"/><path d="M13 13 L16 9.5" stroke="#2a2a2a" stroke-width="2"/><path d="M1 10.5 L5 10.5 M0 13 L5 13 M1 15.5 L5.5 15.5" stroke="#2a2a2a" stroke-width="1.2"/><rect x="4.5" y="8" width="4" height="9" fill="#f6f6f6"/></svg>
<div class="a" style="left:51px;top:99.5px;font-size:15px;font-weight:bold;color:#2b2b2b;white-space:nowrap">Features (36)</div>
<svg style="left:204px;top:100px" width="23" height="17" viewBox="0 0 23 17"><path d="M6 1 L11 1 L13 3.5 L22 3.5 L22 16 L5.5 16" fill="none" stroke="#333" stroke-width="1.3"/><path d="M1.5 4 L1.5 1 L4 1 M1.5 13 L1.5 16 L4 16 M1.5 7 L1.5 10" fill="none" stroke="#333" stroke-width="1.2"/><path d="M8 5.5 L8 14 M3.8 9.8 L12.2 9.8" stroke="#1d4fa8" stroke-width="2"/></svg>
<svg style="left:239px;top:96px" width="23" height="22" viewBox="0 0 23 22"><circle cx="11.5" cy="12.5" r="8.3" fill="none" stroke="#1a1a1a" stroke-width="2.2"/><path d="M8.5 1.5 L14.5 1.5 M11.5 1.5 L11.5 4.2 M18 4 L20 6" stroke="#1a1a1a" stroke-width="2"/><path d="M11.5 12.5 L14 15.5" stroke="#1a1a1a" stroke-width="1.6"/></svg>
<svg style="left:57px;top:134px" width="21" height="19" viewBox="0 0 21 19"><path d="M1 1.5 L19.5 1.5 L12 10.5 L12 18 L9 15.5 L9 10.5 Z" fill="none" stroke="#333" stroke-width="1.5" stroke-linejoin="round"/></svg>
<div class="a" style="left:92px;top:127px;width:184px;height:33px;border:1px solid #c9c9c9;border-radius:3px;background:#fff"></div>
<div class="a" style="left:99px;top:135px;font-size:15px;font-style:italic;color:#9a9a9a;white-space:nowrap">Filter by name or type</div>
<div class="a" style="left:260px;top:161px;width:20px;height:480px;background:#f1f1f1"></div>
<div class="a" style="left:261px;top:438px;width:18px;height:182px;background:#c1c1c1"></div>
<svg style="left:264px;top:168px" width="12" height="7" viewBox="0 0 12 7"><path d="M0.5 6 L6 0.5 L11.5 6 Z" fill="#505050"/></svg>
<svg style="left:264px;top:627px" width="12" height="7" viewBox="0 0 12 7"><path d="M0.5 1 L6 6.5 L11.5 1 Z" fill="#a0a0a0"/></svg>
<div class="a" style="left:52px;top:622px;width:202px;height:8px;background:#c1c1c1"></div>
<div class="a" style="left:46px;top:641px;width:234px;height:1px;background:#dcdcdc"></div>
<div class="fi" style="top:161.6px;color:#9a9a9a">Sketch 6</div>
<svg style="left:53px;top:159px" width="19" height="19" viewBox="0 0 19 19"><path d="M2.5 13.5 L12 2.5 Q13.5 1 15 2.5 Q16.5 4 15 5.5 L5.5 16 L2 16.5 Z M11 4 L13.5 6.5" fill="none" stroke="#a5a5a5" stroke-width="1.1" stroke-linejoin="round"/><path d="M0.5 17 L18 17" stroke="#8b9bd0" stroke-width="1.1"/></svg>
<div class="fi" style="top:192.0px;color:#333">Extrude 6</div>
<svg style="left:53px;top:189px" width="19" height="19" viewBox="0 0 19 19"><path d="M0.8 1 L15.5 1 L18.2 3.7 L18.2 18.3 L3.5 18.3 L0.8 15.6 Z" fill="#fff" stroke="#444" stroke-width="1.05" stroke-linejoin="round"/><path d="M3.5 18.3 L3.5 3.7 L18.2 3.7" fill="none" stroke="#666" stroke-width="0.8"/><path d="M6.5 6.3 L16 6.3 L18.2 8.5 L18.2 18.3 L8.7 18.3 L6.5 16.1 Z" fill="#9a9a9a" stroke="#444" stroke-width="0.9"/><path d="M8.7 18.3 L8.7 8.5 L18.2 8.5" fill="none" stroke="#666" stroke-width="0.6"/></svg>
<div class="fi" style="top:222.4px;color:#9a9a9a">Sketch 8</div>
<svg style="left:53px;top:220px" width="19" height="19" viewBox="0 0 19 19"><path d="M2.5 13.5 L12 2.5 Q13.5 1 15 2.5 Q16.5 4 15 5.5 L5.5 16 L2 16.5 Z M11 4 L13.5 6.5" fill="none" stroke="#a5a5a5" stroke-width="1.1" stroke-linejoin="round"/><path d="M0.5 17 L18 17" stroke="#8b9bd0" stroke-width="1.1"/></svg>
<div class="fi" style="top:252.8px;color:#333">Extrude 8</div>
<svg style="left:53px;top:250px" width="19" height="19" viewBox="0 0 19 19"><path d="M0.8 1 L15.5 1 L18.2 3.7 L18.2 18.3 L3.5 18.3 L0.8 15.6 Z" fill="#fff" stroke="#444" stroke-width="1.05" stroke-linejoin="round"/><path d="M3.5 18.3 L3.5 3.7 L18.2 3.7" fill="none" stroke="#666" stroke-width="0.8"/><path d="M6.5 6.3 L16 6.3 L18.2 8.5 L18.2 18.3 L8.7 18.3 L6.5 16.1 Z" fill="#9a9a9a" stroke="#444" stroke-width="0.9"/><path d="M8.7 18.3 L8.7 8.5 L18.2 8.5" fill="none" stroke="#666" stroke-width="0.6"/></svg>
<div class="fi" style="top:283.2px;color:#9a9a9a">Sketch 9</div>
<svg style="left:53px;top:281px" width="19" height="19" viewBox="0 0 19 19"><path d="M2.5 13.5 L12 2.5 Q13.5 1 15 2.5 Q16.5 4 15 5.5 L5.5 16 L2 16.5 Z M11 4 L13.5 6.5" fill="none" stroke="#a5a5a5" stroke-width="1.1" stroke-linejoin="round"/><path d="M0.5 17 L18 17" stroke="#8b9bd0" stroke-width="1.1"/></svg>
<div class="fi" style="top:313.7px;color:#333">Extrude 9</div>
<svg style="left:53px;top:311px" width="19" height="19" viewBox="0 0 19 19"><path d="M0.8 1 L15.5 1 L18.2 3.7 L18.2 18.3 L3.5 18.3 L0.8 15.6 Z" fill="#fff" stroke="#444" stroke-width="1.05" stroke-linejoin="round"/><path d="M3.5 18.3 L3.5 3.7 L18.2 3.7" fill="none" stroke="#666" stroke-width="0.8"/><path d="M6.5 6.3 L16 6.3 L18.2 8.5 L18.2 18.3 L8.7 18.3 L6.5 16.1 Z" fill="#9a9a9a" stroke="#444" stroke-width="0.9"/><path d="M8.7 18.3 L8.7 8.5 L18.2 8.5" fill="none" stroke="#666" stroke-width="0.6"/></svg>
<div class="fi" style="top:344.1px;color:#9a9a9a">Sketch 10</div>
<svg style="left:53px;top:341px" width="19" height="19" viewBox="0 0 19 19"><path d="M2.5 13.5 L12 2.5 Q13.5 1 15 2.5 Q16.5 4 15 5.5 L5.5 16 L2 16.5 Z M11 4 L13.5 6.5" fill="none" stroke="#a5a5a5" stroke-width="1.1" stroke-linejoin="round"/><path d="M0.5 17 L18 17" stroke="#8b9bd0" stroke-width="1.1"/></svg>
<div class="fi" style="top:374.5px;color:#333">Extrude 10</div>
<svg style="left:53px;top:372px" width="19" height="19" viewBox="0 0 19 19"><path d="M0.8 1 L15.5 1 L18.2 3.7 L18.2 18.3 L3.5 18.3 L0.8 15.6 Z" fill="#fff" stroke="#444" stroke-width="1.05" stroke-linejoin="round"/><path d="M3.5 18.3 L3.5 3.7 L18.2 3.7" fill="none" stroke="#666" stroke-width="0.8"/><path d="M6.5 6.3 L16 6.3 L18.2 8.5 L18.2 18.3 L8.7 18.3 L6.5 16.1 Z" fill="#9a9a9a" stroke="#444" stroke-width="0.9"/><path d="M8.7 18.3 L8.7 8.5 L18.2 8.5" fill="none" stroke="#666" stroke-width="0.6"/></svg>
<div class="fi" style="top:404.9px;color:#9a9a9a">Sketch 11</div>
<svg style="left:53px;top:402px" width="19" height="19" viewBox="0 0 19 19"><path d="M2.5 13.5 L12 2.5 Q13.5 1 15 2.5 Q16.5 4 15 5.5 L5.5 16 L2 16.5 Z M11 4 L13.5 6.5" fill="none" stroke="#a5a5a5" stroke-width="1.1" stroke-linejoin="round"/><path d="M0.5 17 L18 17" stroke="#8b9bd0" stroke-width="1.1"/></svg>
<div class="fi" style="top:435.3px;color:#333">Extrude 11</div>
<svg style="left:53px;top:433px" width="19" height="19" viewBox="0 0 19 19"><path d="M0.8 1 L15.5 1 L18.2 3.7 L18.2 18.3 L3.5 18.3 L0.8 15.6 Z" fill="#fff" stroke="#444" stroke-width="1.05" stroke-linejoin="round"/><path d="M3.5 18.3 L3.5 3.7 L18.2 3.7" fill="none" stroke="#666" stroke-width="0.8"/><path d="M6.5 6.3 L16 6.3 L18.2 8.5 L18.2 18.3 L8.7 18.3 L6.5 16.1 Z" fill="#9a9a9a" stroke="#444" stroke-width="0.9"/><path d="M8.7 18.3 L8.7 8.5 L18.2 8.5" fill="none" stroke="#666" stroke-width="0.6"/></svg>
<div class="fi" style="top:465.7px;color:#333">Mirror 3</div>
<svg style="left:53px;top:463px" width="19" height="19" viewBox="0 0 19 19"><path d="M1 3 L3.5 1 L7 1 L7 9.5 L9.5 12 L9.5 18.5 L3.5 18.5 L1 16 Z" fill="#fff" stroke="#444" stroke-width="1"/><path d="M3 3 L3 16" stroke="#444" stroke-width="0.7"/><path d="M12 18.5 L12 10.5 L14.5 8 L14.5 1 L18 3 L18 18.5 Z" fill="#8d8d8d" stroke="#444" stroke-width="1"/></svg>
<div class="fi" style="top:496.1px;color:#9a9a9a">Plane 1</div>
<svg style="left:53px;top:493px" width="19" height="19" viewBox="0 0 19 19"><path d="M1 1 L17.5 3.5 L17.5 18.5 L1 16 Z" fill="#e4e4e4" stroke="#aaa" stroke-width="1.1"/><path d="M9 2 L9 9 L17.5 10.5" fill="none" stroke="#aaa" stroke-width="1"/></svg>
<div class="fi" style="top:526.5px;color:#9a9a9a">Sketch 12</div>
<svg style="left:53px;top:524px" width="19" height="19" viewBox="0 0 19 19"><path d="M2.5 13.5 L12 2.5 Q13.5 1 15 2.5 Q16.5 4 15 5.5 L5.5 16 L2 16.5 Z M11 4 L13.5 6.5" fill="none" stroke="#a5a5a5" stroke-width="1.1" stroke-linejoin="round"/><path d="M0.5 17 L18 17" stroke="#8b9bd0" stroke-width="1.1"/></svg>
<div class="fi" style="top:556.9px;color:#333">Extrude 12</div>
<svg style="left:53px;top:554px" width="19" height="19" viewBox="0 0 19 19"><path d="M0.8 1 L15.5 1 L18.2 3.7 L18.2 18.3 L3.5 18.3 L0.8 15.6 Z" fill="#fff" stroke="#444" stroke-width="1.05" stroke-linejoin="round"/><path d="M3.5 18.3 L3.5 3.7 L18.2 3.7" fill="none" stroke="#666" stroke-width="0.8"/><path d="M6.5 6.3 L16 6.3 L18.2 8.5 L18.2 18.3 L8.7 18.3 L6.5 16.1 Z" fill="#9a9a9a" stroke="#444" stroke-width="0.9"/><path d="M8.7 18.3 L8.7 8.5 L18.2 8.5" fill="none" stroke="#666" stroke-width="0.6"/></svg>
<div class="fi" style="top:587.3px;color:#333">Fillet 2</div>
<svg style="left:53px;top:585px" width="19" height="19" viewBox="0 0 19 19"><path d="M1 8 Q1 1 8 1 L15.5 1 Q18 1 18 3.5 L18 18.5 L3.5 18.5 Q1 18.5 1 16 Z" fill="#fff" stroke="#444" stroke-width="1.05"/><path d="M1 8 Q1.5 3 6 2.7 Q3.5 5 3.5 9 L3.5 18.5" fill="#9a9a9a" stroke="#444" stroke-width="0.8"/><path d="M6 2.7 L16 2.7" stroke="#555" stroke-width="0.7"/></svg>
<svg style="left:51px;top:653px" width="14" height="9" viewBox="0 0 14 9"><path d="M1 1 L7 7 L13 1" fill="none" stroke="#333" stroke-width="2"/></svg>
<div class="a" style="left:73px;top:648.5px;font-size:15px;color:#333;white-space:nowrap;letter-spacing:0.2px">Parts (3)</div>
<svg style="left:75px;top:678px" width="19" height="19" viewBox="0 0 19 19"><path d="M0.6 8.5 L8.3 8.5 L8.3 0.6 L13 0.6 L17.5 4.2 L17.5 17.5 L3.6 17.5 L0.6 13.6 Z" fill="#fff" stroke="#4a4a4a" stroke-width="1.05" stroke-linejoin="round"/><path d="M8.3 0.6 L12.6 4.3 L12.6 12.6 L3.6 12.6 L0.6 8.5 M12.6 4.3 L17.5 4.2 M3.6 12.6 L3.6 17.5" fill="none" stroke="#777" stroke-width="0.8"/></svg>
<div class="a" style="left:99px;top:678.8px;font-size:15px;color:#333;white-space:nowrap;letter-spacing:0.2px">shoulderpet_body</div>
<svg style="left:75px;top:708px" width="19" height="19" viewBox="0 0 19 19"><path d="M0.6 8.5 L8.3 8.5 L8.3 0.6 L13 0.6 L17.5 4.2 L17.5 17.5 L3.6 17.5 L0.6 13.6 Z" fill="#fff" stroke="#4a4a4a" stroke-width="1.05" stroke-linejoin="round"/><path d="M8.3 0.6 L12.6 4.3 L12.6 12.6 L3.6 12.6 L0.6 8.5 M12.6 4.3 L17.5 4.2 M3.6 12.6 L3.6 17.5" fill="none" stroke="#777" stroke-width="0.8"/></svg>
<div class="a" style="left:99px;top:709.1px;font-size:15px;color:#333;white-space:nowrap;letter-spacing:0.2px">shoulderpet_lid</div>
<svg style="left:75px;top:738px" width="19" height="19" viewBox="0 0 19 19"><path d="M0.6 8.5 L8.3 8.5 L8.3 0.6 L13 0.6 L17.5 4.2 L17.5 17.5 L3.6 17.5 L0.6 13.6 Z" fill="#fff" stroke="#4a4a4a" stroke-width="1.05" stroke-linejoin="round"/><path d="M8.3 0.6 L12.6 4.3 L12.6 12.6 L3.6 12.6 L0.6 8.5 M12.6 4.3 L17.5 4.2 M3.6 12.6 L3.6 17.5" fill="none" stroke="#777" stroke-width="0.8"/></svg>
<div class="a" style="left:99px;top:739.5px;font-size:15px;color:#333;white-space:nowrap;letter-spacing:0.2px">shoulderpet_tail</div>
<div class="a" style="left:286px;top:487px;width:38px;height:40px;background:#fff;border:1px solid #d6d6d6;border-left:none"></div>
<svg style="left:292px;top:496px" width="26" height="24" viewBox="0 0 26 24"><path d="M2.2 2 L5.6 5.4 L9 2" fill="none" stroke="#333" stroke-width="1.7"/><path d="M5.6 7.5 L5.6 22" stroke="#333" stroke-width="1.5"/><path d="M11 3.1 L23 3.1" stroke="#777" stroke-width="1.7"/><path d="M8.6 8.8 L23 8.8 M8.6 14.6 L23 14.6 M8.6 20.5 L23 20.5" stroke="#505050" stroke-width="1.7"/></svg>
<svg style="left:9px;top:951px" width="26" height="20" viewBox="0 0 26 20"><path d="M1 3 L17 3 L17 6 Q11 6 9 12 L1 12 Z" fill="#333"/><circle cx="15.5" cy="12" r="5.2" fill="none" stroke="#333" stroke-width="2.2"/><path d="M19 15.5 L23 19.5" stroke="#333" stroke-width="2.6"/></svg>
<div class="a" style="left:92px;top:944px;width:234px;height:33px;background:#fff"></div>
<div class="a" style="left:92px;top:974px;width:233px;height:3px;background:#2a4f96"></div>
<svg style="left:55px;top:951px" width="20" height="18" viewBox="0 0 20 18"><path d="M10 1 L10 17 M2 9 L18 9" stroke="#4d4d4d" stroke-width="3"/></svg>
<svg style="left:104px;top:949px" width="22" height="22" viewBox="0 0 22 22"><path d="M1 6 L4 4 L8 4 L8 20 L3 20 L1 18 Z M12 4 L14 1.5 L18 1.5 L20 3.5 L20 20 L12 20 Z" fill="#fff" stroke="#444" stroke-width="1.1"/><path d="M3 6 L3 18 M14 3.5 L14 18 M8 4 L12 4 M8 20 L12 20" fill="none" stroke="#444" stroke-width="0.9"/></svg>
<div class="a" style="left:130px;top:951.5px;font-size:16px;color:#333;white-space:nowrap">Part Studio 1</div>
<!-- viewcube -->
<svg style="left:0;top:0" width="1600" height="980" viewBox="0 0 1600 980">
<path d="M1487,117 L1495,108 L1503,117 Z" fill="#e2e8ef"/>
<path d="M1419,186 L1408,194 L1419,202 Z" fill="#e2e8ef"/>
<path d="M1571,186 L1582,194 L1571,202 Z" fill="#e2e8ef"/>
<path d="M1487,271 L1495,280 L1503,271 Z" fill="#e2e8ef"/>
<path d="M1470,121 Q1450,126 1440,137" fill="none" stroke="#e2e8ef" stroke-width="6"/>
<path d="M1431,146 L1433,131 L1446,140 Z" fill="#e2e8ef"/>
<path d="M1520,121 Q1540,126 1550,137" fill="none" stroke="#e2e8ef" stroke-width="6"/>
<path d="M1559,146 L1557,131 L1544,140 Z" fill="#e2e8ef"/>
<path d="M1495,146 L1539,171 Q1541,173 1541,176 L1541,221 Q1541,224 1539,225 L1495,246 L1451,225 Q1449,224 1449,221 L1449,176 Q1449,173 1451,171 Z" fill="#e2e8ef"/>
<path d="M1495,153 L1527,168 Q1530,170 1527,172 L1498,187 Q1495,188 1492,187 L1463,172 Q1460,170 1463,168 Z" fill="#fff"/>
<path d="M1457,180 L1488,196 Q1490,197 1490,200 L1490,232 Q1490,235 1487,234 L1458,219 Q1456,218 1456,215 L1456,183 Q1456,179 1457,180 Z" fill="#fff"/>
<path d="M1533,180 L1502,196 Q1500,197 1500,200 L1500,232 Q1500,235 1503,234 L1532,219 Q1534,218 1534,215 L1534,183 Q1534,179 1533,180 Z" fill="#fff"/>
<circle cx="1495" cy="192" r="5" fill="#fff"/>
<ellipse cx="1495" cy="238" rx="8" ry="3.5" fill="#fff"/>
<ellipse cx="1452" cy="166" rx="3" ry="6" fill="#fff" transform="rotate(30 1452 166)"/>
<ellipse cx="1538" cy="166" rx="3" ry="6" fill="#fff" transform="rotate(-30 1538 166)"/>
<text x="1495" y="169" font-family="Liberation Sans" font-style="italic" font-size="11.5" fill="#555" text-anchor="middle" transform="rotate(36 1495 165)">Top</text>
<text x="1470" y="214" font-family="Liberation Sans" font-size="12.5" fill="#555" text-anchor="middle" transform="rotate(29 1470 209)">Front</text>
<text x="1519" y="214" font-family="Liberation Sans" font-style="italic" font-size="12.5" fill="#555" text-anchor="middle" transform="rotate(-33 1519 209)">Right</text>
<path d="M1444,222.8 L1492.3,195" stroke="#7fc77a" stroke-width="1" stroke-dasharray="3 2"/>
<path d="M1444,222.8 L1462,212.5" stroke="#3da83a" stroke-width="1.6"/>
<path d="M1444,222.8 L1444,167.8" stroke="#5656d2" stroke-width="1.8"/>
<path d="M1444,222.8 L1492.3,250.7" stroke="#d9545a" stroke-width="1.8"/>
<text x="1443.5" y="163" font-family="Liberation Sans" font-weight="bold" font-size="13" fill="#4040d8" text-anchor="middle">Z</text>
<text x="1501" y="262" font-family="Liberation Sans" font-size="13" fill="#d83a3a" text-anchor="middle">X</text>
<text x="1500" y="192" font-family="Liberation Sans" font-size="9" fill="#a9d8a4" text-anchor="middle">Y</text>
</svg>
<svg style="left:1536px;top:261px" width="22" height="22" viewBox="0 0 22 22"><path d="M11 1 L20.5 5 L20.5 16 L11 21 L1.5 16 L1.5 5 Z" fill="#d8d8d8" stroke="#333" stroke-width="1.2"/><path d="M1.5 5 L11 9 L20.5 5 M11 9 L11 21" fill="none" stroke="#333" stroke-width="1"/><path d="M1.5 5 L11 9 L11 21 L1.5 16Z" fill="#a5a5a5"/><path d="M1.5 5 L11 9 L11 21 L1.5 16Z M11 9 L20.5 5" fill="none" stroke="#333" stroke-width="1"/></svg>
<svg style="left:1566px;top:267px" width="10" height="6" viewBox="0 0 10 6"><path d="M0 0 L10 0 L5 5.5Z" fill="#222"/></svg>
<div class="a" style="left:1562px;top:429px;width:40px;height:155px;border:1px solid #d4d4d4;background:#fff"></div>
<div class="a" style="left:1563px;top:468px;width:37px;height:1px;background:#d4d4d4"></div>
<div class="a" style="left:1563px;top:507px;width:37px;height:1px;background:#d4d4d4"></div>
<div class="a" style="left:1563px;top:546px;width:37px;height:1px;background:#d4d4d4"></div>
<svg style="left:1568px;top:436px" width="26" height="26" viewBox="0 0 26 26"><circle cx="13" cy="9" r="6.3" fill="#a3a3a3" stroke="#333" stroke-width="1.1"/><circle cx="18.5" cy="18" r="6.3" fill="#fff" stroke="#333" stroke-width="1.1"/><circle cx="8.7" cy="18" r="6.5" fill="#1d50b8" stroke="#333" stroke-width="1.1"/></svg>
<svg style="left:1568px;top:475px" width="26" height="26" viewBox="0 0 26 26"><path d="M15 6 L23 10 L23 19 L15 23 L7 19 L7 10 Z" fill="#fff" stroke="#333" stroke-width="1.1"/><path d="M7 10 L15 14 L23 10 M15 14 L15 23" fill="none" stroke="#333" stroke-width="1"/><rect x="2" y="1" width="12" height="9" fill="#5577dd"/><path d="M6 1 L6 10 M10 1 L10 10 M2 4 L14 4 M2 7 L14 7" stroke="#aebdf0" stroke-width="0.7"/><rect x="2" y="1" width="12" height="9" fill="none" stroke="#2b4ac0" stroke-width="0.8"/></svg>
<svg style="left:1568px;top:514px" width="26" height="26" viewBox="0 0 26 26"><rect x="3" y="1" width="10" height="8" fill="#555"/><path d="M6.3 1 L6.3 9 M9.6 1 L9.6 9 M3 3.7 L13 3.7 M3 6.3 L13 6.3" stroke="#fff" stroke-width="0.6"/><path d="M14 8 L20 11 L20 17 L14 20 L8 17 L8 11 Z" fill="#fff" stroke="#333" stroke-width="1"/><path d="M8 11 L14 14 L20 11 M14 14 L14 20" fill="none" stroke="#333" stroke-width="0.9"/><path d="M5 12 Q3 12 3 14 L3 16 L1.5 17 L3 18 L3 21 Q3 23 5 23 M22 6 Q24 6 24 8 L24 12 L25.5 13 L24 14 L24 21 Q24 23 22 23" fill="none" stroke="#333" stroke-width="1"/></svg>
<svg style="left:1568px;top:553px" width="26" height="26" viewBox="0 0 26 26"><rect x="3" y="1" width="11" height="9" fill="#444"/><path d="M6.7 1 L6.7 10 M10.4 1 L10.4 10 M3 4 L14 4 M3 7 L14 7" stroke="#fff" stroke-width="0.6"/><path d="M3 10 Q0.5 16 3 23 M22 10 Q25 16 22 23" fill="none" stroke="#222" stroke-width="1.6"/><path d="M8 13 Q11 11 13 14 L16 20 Q17 22 19 21 M18 13 Q15 15 13 18 Q11 22 7 21" fill="none" stroke="#222" stroke-width="1.8"/></svg>
<svg style="left:1525px;top:919px" width="21" height="16" viewBox="0 0 21 16"><path d="M1 8.5 L10 8.5 Q8.5 7 8.5 5.5 Q8.5 1 14 1 Q19.5 1 19.5 5.5 L19.5 11 Q19.5 15 15 15 L1 15 Z" fill="#fff" stroke="#222" stroke-width="1.2" stroke-linejoin="round"/><path d="M8.5 5.5 Q9 9.5 14 9.5 Q19.5 9.5 19.5 5.5" fill="none" stroke="#222" stroke-width="1.1"/><ellipse cx="14" cy="5.3" rx="2.6" ry="1.3" fill="none" stroke="#222" stroke-width="1.1"/><path d="M3 11.5 L3 13 M5.5 11.5 L5.5 13 M8 11.5 L8 13 M10.5 11.5 L10.5 13 M13 11.5 L13 13" stroke="#222" stroke-width="1"/></svg>
<svg style="left:1567px;top:918px" width="19" height="18" viewBox="0 0 19 18"><path d="M9.5 1.5 L9.5 15.5 M4 1.5 L15 1.5" stroke="#222" stroke-width="1.4"/><path d="M1.5 16.5 L17.5 16.5" stroke="#222" stroke-width="1.7"/><path d="M4 1.5 L1.8 10.5 L6.2 10.5 Z M15 1.5 L12.8 10.5 L17.2 10.5 Z" fill="none" stroke="#222" stroke-width="1"/><path d="M1.2 10.8 L6.8 10.8 M12.2 10.8 L17.8 10.8" stroke="#222" stroke-width="1.8"/></svg>
</body></html>
